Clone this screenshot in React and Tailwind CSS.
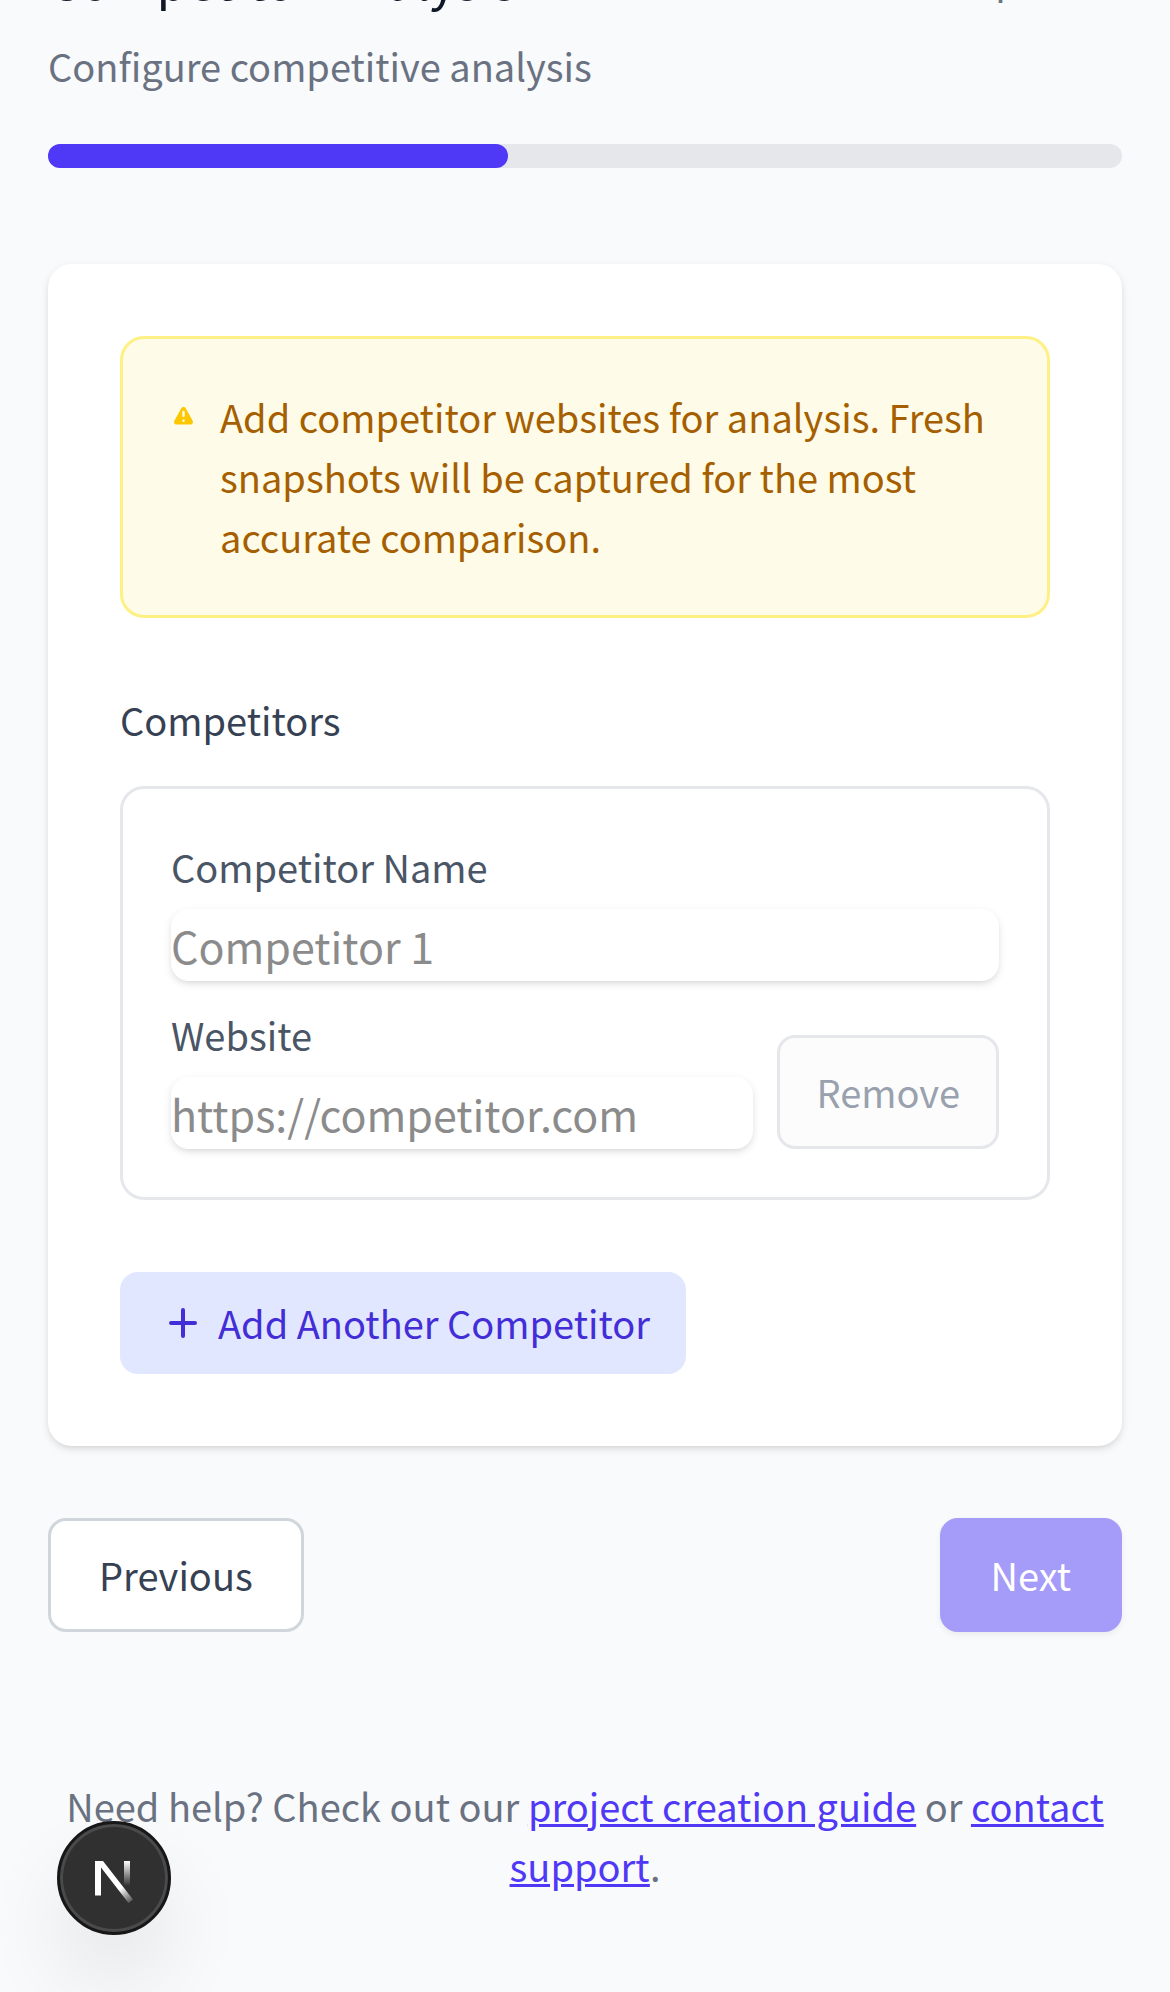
import React from "react";

const link = "text-[#4f39f6] underline";
const input =
  "block h-18 w-full rounded-[18px] text-[43px] leading-[70px] shadow-[0_3px_9px_rgb(0_0_0/0.1),0_3px_6px_-3px_rgb(0_0_0/0.1)] placeholder:text-[#8b8b8b]";
const label = "mb-3 block text-gray-600";

export default function App() {
  return (
    <div className="min-h-screen overflow-hidden bg-gray-50 font-['Noto_Sans_CJK_SC',sans-serif] text-[38px] leading-[60px]">
      <main className="-mt-16 px-12 pb-24">
        <header className="flex items-center justify-between">
          <h1 className="text-[50px] leading-[84px] text-gray-900">Competitor Analysis</h1>
          <span className="text-gray-500">Step 3 of 7</span>
        </header>
        <p className="mt-4 text-gray-500">Configure competitive analysis</p>
        <div className="mt-12 h-6 rounded-full bg-gray-200" role="progressbar" aria-label="Setup progress" aria-valuenow={3} aria-valuemax={7}>
          <div className="h-6 w-3/7 rounded-full bg-[#4f39f6]" />
        </div>

        <section className="mt-24 rounded-3xl bg-white p-18 shadow-[0_3px_9px_rgb(0_0_0/0.1),0_3px_6px_-3px_rgb(0_0_0/0.1)]">
          <div className="flex items-start gap-6 rounded-3xl border-3 border-[#fff085] bg-[#fefce8] p-12">
            <svg className="h-15 w-[25px] shrink-0 text-[#fdc700]" viewBox="0 0 20 20" fill="currentColor" aria-hidden="true">
              <path fillRule="evenodd" clipRule="evenodd" d="M8.257 3.099c.765-1.36 2.722-1.36 3.486 0l5.58 9.92c.75 1.334-.213 2.98-1.742 2.98H4.42c-1.53 0-2.493-1.646-1.743-2.98l5.58-9.92zM11 13a1 1 0 11-2 0 1 1 0 012 0zm-1-8a1 1 0 00-1 1v3a1 1 0 002 0V6a1 1 0 00-1-1z" />
            </svg>
            <p className="text-[#a65f00]">
              Add competitor websites for analysis. Fresh snapshots will be captured for the most accurate comparison.
            </p>
          </div>

          <h2 className="mt-18 text-gray-700">Competitors</h2>
          <div className="mt-9 flex flex-col gap-6 rounded-3xl border-3 border-gray-200 p-12">
            <div>
              <label htmlFor="name" className={label}>Competitor Name</label>
              <input id="name" type="text" placeholder="Competitor 1" className={input} />
            </div>
            <div className="flex items-end gap-6">
              <div className="min-w-0 flex-1">
                <label htmlFor="site" className={label}>Website</label>
                <input id="site" type="url" placeholder="https://competitor.com" className={input} />
              </div>
              <button type="button" disabled className="rounded-[18px] border-3 border-gray-200 bg-[#fcfcfc] px-9 py-6 text-gray-400">Remove</button>
            </div>
          </div>

          <button type="button" className="mt-18 flex items-center gap-5 rounded-[18px] bg-[#e0e7ff] py-[21px] pr-9 pl-12 text-[#432dd7]">
            <svg className="size-[30px] shrink-0" viewBox="0 0 30 30" fill="none" stroke="currentColor" strokeWidth="4" strokeLinecap="round" aria-hidden="true">
              <path d="M15 2v26M3 15h24" />
            </svg>
            Add Another Competitor
          </button>
        </section>

        <div className="mt-18 flex justify-between">
          <button type="button" className="rounded-[18px] border-3 border-gray-300 bg-white px-12 py-6 text-gray-700">Previous</button>
          <button type="button" disabled className="rounded-[18px] border-3 border-[#a59bf9] bg-[#a59bf9] px-12 py-6 text-white shadow-[0_3px_6px_rgb(0_0_0/0.06)]">Next</button>
        </div>

        <p className="mt-36 text-center text-gray-500">
          Need help? Check out our <a href="#guide" className={link}>project creation guide</a> or{" "}
          <a href="#support" className={link}>contact support</a>.
        </p>
      </main>

      <button type="button" aria-label="Open developer tools" className="fixed bottom-[57px] left-[57px] flex size-[114px] items-center justify-center rounded-full border-3 border-[#171717] bg-[#303030] shadow-[inset_0_0_0_3px_#4a4a4a,0_48px_96px_-24px_rgb(0_0_0/0.24)]">
        <svg className="size-[108px] shrink-0" viewBox="3 3 108 108" fill="none" aria-hidden="true">
          <defs>
            <linearGradient id="diag" x1="61" y1="63" x2="76" y2="84" gradientUnits="userSpaceOnUse">
              <stop offset="0.2" stopColor="#fff" />
              <stop offset="1" stopColor="#fff" stopOpacity="0" />
            </linearGradient>
            <linearGradient id="bar" x1="70" y1="40" x2="70" y2="65" gradientUnits="userSpaceOnUse">
              <stop stopColor="#fff" />
              <stop offset="1" stopColor="#fff" stopOpacity="0" />
            </linearGradient>
          </defs>
          <path fill="url(#bar)" d="M67 40h6v25h-6z" />
          <path fill="url(#diag)" d="M38 40h8l30 38.500-4.500 3.500-27.500-35.500v28h-6z" />
        </svg>
      </button>
    </div>
  );
}
